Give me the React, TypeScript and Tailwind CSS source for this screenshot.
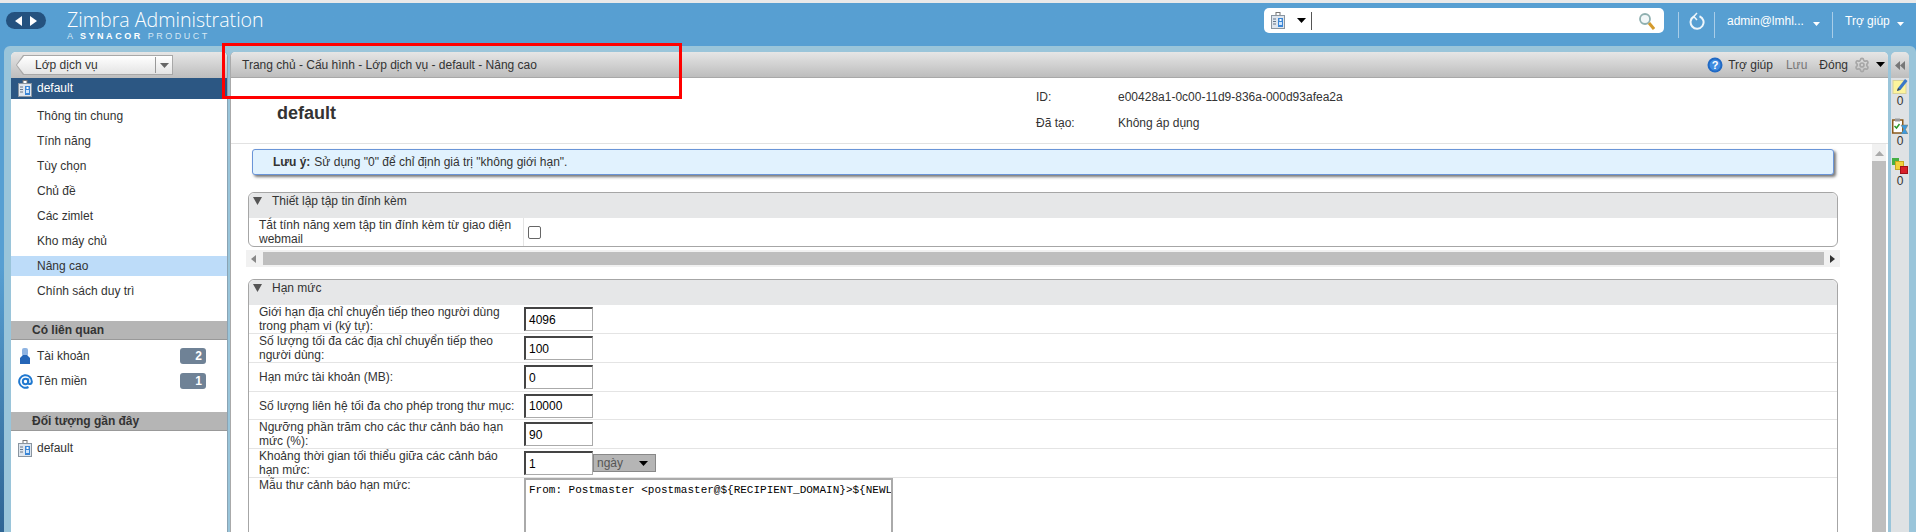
import type { ReactNode } from "react";
import { Settings } from "lucide-react";

const SANS = "font-['Liberation_Sans',Arial,sans-serif]";

const navItems = [
  "Thông tin chung",
  "Tính năng",
  "Tùy chọn",
  "Chủ đề",
  "Các zimlet",
  "Kho máy chủ",
  "Nâng cao",
  "Chính sách duy trì",
];

function Caret({ className = "" }: { className?: string }) {
  return (
    <svg width="9" height="5" viewBox="0 0 9 5" className={className}>
      <path d="M0 0h9L4.5 5z" fill="currentColor" />
    </svg>
  );
}

function CosIcon() {
  return (
    <svg width="16" height="17" viewBox="0 0 16 17" className="shrink-0">
      <rect x="6" y="0.5" width="4" height="4" fill="#fff" stroke="#777" />
      <rect x="1.5" y="3.5" width="13" height="13" fill="#dfe6ee" stroke="#8a95a0" />
      <path d="M3 7h3M3 9.5h3M3 12h3" stroke="#66778a" />
      <rect x="8" y="6" width="5" height="9" fill="#3b86d6" />
      <rect x="9.5" y="7" width="2" height="2" fill="#fff" />
      <rect x="9" y="10" width="3" height="3" fill="#cfe5fb" />
    </svg>
  );
}

function AccountIcon() {
  return (
    <svg width="10" height="16" viewBox="0 0 10 16">
      <rect x="2" y="0" width="6" height="8" rx="2" fill="#8fb4e2" />
      <path d="M3 7h4l3 3v6H0v-6z" fill="#2566b8" />
    </svg>
  );
}

function DomainIcon() {
  return (
    <svg width="15" height="15" viewBox="0 0 15 15" fill="none" stroke="#1f78d0" strokeWidth="2">
      <circle cx="7.5" cy="7.5" r="2.7" />
      <path d="M10.2 4.5v4.2c0 2 3.6 2 3.6-1.2A6.3 6.3 0 1 0 10.5 13" />
    </svg>
  );
}

function Row({
  label,
  children,
  height,
}: {
  label: string;
  children: ReactNode;
  height: string;
}) {
  return (
    <div className={`flex border-b border-[#e4e4e4] ${height}`}>
      <div className="flex w-[274px] shrink-0 items-center pl-[10px] pr-[2px] leading-[14px]">
        {label}
      </div>
      <div className="flex items-center pl-px">{children}</div>
    </div>
  );
}

function NumberBox({ value }: { value: string }) {
  return (
    <div className="flex h-[24px] w-[69px] items-center border border-t-2 border-l-2 border-t-[#444] border-r-[#aaa] border-b-[#aaa] border-l-[#444] bg-white pl-[3px] text-[12px] text-black">
      {value}
    </div>
  );
}

function Section({
  title,
  className,
  children,
}: {
  title: string;
  className: string;
  children: ReactNode;
}) {
  return (
    <section
      className={`ml-[17px] mr-[33px] rounded-[6px] border border-[#a6a6a6] ${className}`}
    >
      <div className="flex h-[25px] items-start gap-[10px] rounded-t-[6px] bg-[#e6e7e8] pl-[3px] text-[#333]">
        <svg width="9" height="9" viewBox="0 0 9 9" className="mt-[3px] ml-[1px]">
          <path d="M0 1h9L4.5 9z" fill="#555" />
        </svg>
        <span className="leading-[16px]">{title}</span>
      </div>
      {children}
    </section>
  );
}

function Sidebar() {
  return (
    <aside className="flex w-[217px] shrink-0 flex-col rounded-t-[5px] border-r border-[#8aa3b3] bg-white">
      <div className="flex h-[26px] items-center rounded-t-[5px] bg-gradient-to-b from-[#e6e6e6] to-[#bdbdbd] pl-[5px]">
        <div className="h-[20px] w-[157px] bg-[#a8a8a8] p-px [clip-path:polygon(7px_0,100%_0,100%_100%,7px_100%,0_50%)]">
          <div className="flex h-full items-center bg-gradient-to-b from-white to-[#e4e4e4] pl-[18px] text-[#333] [clip-path:polygon(7px_0,100%_0,100%_100%,7px_100%,0_50%)]">
            <span className="flex-1">Lớp dịch vụ</span>
            <span className="flex h-[16px] w-[17px] items-center justify-center border-l border-[#999]">
              <Caret className="text-[#666]" />
            </span>
          </div>
        </div>
      </div>
      <div className="flex h-[21px] items-center gap-[4px] bg-[#2c5783] pb-px pl-[6px] text-white">
        <CosIcon />
        default
      </div>
      <nav className="pt-[7px]">
        {navItems.map((item) => (
          <div
            key={item}
            className={`mb-[5px] flex h-[20px] items-center pl-[26px] text-[#333] ${
              item === "Nâng cao" ? "bg-[#bddcf9]" : ""
            }`}
          >
            {item}
          </div>
        ))}
      </nav>
      <div className="mt-[15px] flex h-[19px] items-center border-b border-[#999] bg-[#b5b5b5] pl-[21px] font-bold text-[#333]">
        Có liên quan
      </div>
      <div className="pt-[6px]">
        <div className="flex h-[20px] items-center text-[#333]">
          <span className="flex w-[26px] justify-center pl-[2px]">
            <AccountIcon />
          </span>
          <span className="flex-1">Tài khoản</span>
          <span className="mr-[21px] flex h-[16px] w-[26px] items-center justify-end rounded-[3px] bg-[#6f8296] pr-[4px] font-bold text-white">
            2
          </span>
        </div>
        <div className="mt-[5px] flex h-[20px] items-center text-[#333]">
          <span className="flex w-[26px] justify-center pl-[2px]">
            <DomainIcon />
          </span>
          <span className="flex-1">Tên miền</span>
          <span className="mr-[21px] flex h-[16px] w-[26px] items-center justify-end rounded-[3px] bg-[#6f8296] pr-[4px] font-bold text-white">
            1
          </span>
        </div>
      </div>
      <div className="mt-[21px] flex h-[19px] items-center border-b border-[#999] bg-[#b5b5b5] pl-[21px] font-bold text-[#333]">
        Đối tượng gần đây
      </div>
      <div className="flex h-[34px] items-center gap-[4px] pl-[6px] text-[#333]">
        <CosIcon />
        default
      </div>
    </aside>
  );
}

function MainPanel() {
  return (
    <main className="flex min-w-0 flex-1 flex-col rounded-t-[5px] border-l border-[#aaa] bg-white">
      <div className="flex h-[26px] shrink-0 items-center rounded-t-[5px] border-b border-[#a8a8a8] bg-gradient-to-b from-[#e6e6e6] to-[#bdbdbd] pl-[11px] pr-[3px] text-[#333]">
        <span className="flex-1">Trang chủ - Cấu hình - Lớp dịch vụ - default - Nâng cao</span>
        <svg width="16" height="16" viewBox="0 0 16 16" className="mr-[5px]">
          <circle cx="8" cy="8" r="7.5" fill="#2069c4" />
          <circle cx="8" cy="8" r="5.5" fill="#3f8ce0" />
          <text x="8" y="12" textAnchor="middle" fontSize="11" fontWeight="700" fill="#fff" fontFamily="Liberation Sans">?</text>
        </svg>
        <span>Trợ giúp</span>
        <span className="ml-[13px] text-[#777]">Lưu</span>
        <span className="ml-[12px]">Đóng</span>
        <Settings size={16} color="#a6a6a6" strokeWidth={2.5} className="ml-[6px]" />
        <Caret className="ml-[6px] text-black" />
      </div>

      <div className="flex h-[66px] shrink-0 border-b border-[#e2e2e2]">
        <h1 className="ml-[46px] mt-[25px] text-[18px] leading-[20px] font-bold text-[#333]">default</h1>
        <dl className="ml-[700px] pt-[10px] text-[#333]">
          <div className="flex h-[26px]">
            <dt className="w-[82px]">ID:</dt>
            <dd>e00428a1-0c00-11d9-836a-000d93afea2a</dd>
          </div>
          <div className="flex">
            <dt className="w-[82px]">Đã tạo:</dt>
            <dd>Không áp dụng</dd>
          </div>
        </dl>
      </div>

      <div className="flex min-h-0 flex-1">
        <div className="min-w-0 flex-1 overflow-hidden text-[#333]">
          <div className="ml-[21px] mr-[37px] mt-[5px] flex h-[26px] items-center rounded-[3px] border border-[#6a95d8] bg-[#e1f2fe] pl-[20px] shadow-[2px_2px_3px_#777]">
            <b className="mr-[4px]">Lưu ý:</b> Sử dụng "0" để chỉ định giá trị "không giới hạn".
          </div>

          <Section title="Thiết lập tập tin đính kèm" className="mt-[17px]">
            <div className="flex h-[28px]">
              <div className="flex w-[275px] shrink-0 items-center border-r border-[#e4e4e4] pl-[10px] pr-[2px] leading-[14px]">
                Tắt tính năng xem tập tin đính kèm từ giao diện webmail
              </div>
              <span className="mt-[8px] ml-[4px] h-[13px] w-[13px] rounded-[2px] border border-[#666] bg-white" />
            </div>
          </Section>

          <div className="ml-[15px] mr-[31px] mt-[3px] flex h-[17px] items-center bg-[#f1f1f1]">
            <svg width="5" height="8" viewBox="0 0 5 8" className="ml-[5px] mr-[7px]">
              <path d="M5 0v8L0 4z" fill="#888" />
            </svg>
            <div className="h-[13px] flex-1 bg-[#bebebe]" />
            <svg width="5" height="8" viewBox="0 0 5 8" className="ml-[6px] mr-[5px]">
              <path d="M0 0v8l5-4z" fill="#333" />
            </svg>
          </div>

          <Section title="Hạn mức" className="mt-[12px] h-[400px]">
            <Row label="Giới hạn địa chỉ chuyển tiếp theo người dùng trong phạm vi (ký tự):" height="h-[29px]">
              <NumberBox value="4096" />
            </Row>
            <Row label="Số lượng tối đa các địa chỉ chuyển tiếp theo người dùng:" height="h-[29px]">
              <NumberBox value="100" />
            </Row>
            <Row label="Hạn mức tài khoản (MB):" height="h-[29px]">
              <NumberBox value="0" />
            </Row>
            <Row label="Số lượng liên hệ tối đa cho phép trong thư mục:" height="h-[28px]">
              <NumberBox value="10000" />
            </Row>
            <Row label="Ngưỡng phần trăm cho các thư cảnh báo hạn mức (%):" height="h-[29px]">
              <NumberBox value="90" />
            </Row>
            <Row label="Khoảng thời gian tối thiểu giữa các cảnh báo hạn mức:" height="h-[29px]">
              <NumberBox value="1" />
              <div className="flex h-[18px] w-[63px] items-center justify-between border border-[#888] bg-[#b5b5b5] pl-[3px] pr-[7px] text-[#555]">
                ngày
                <Caret className="text-black" />
              </div>
            </Row>
            <div className="flex">
              <div className="w-[274px] shrink-0 pl-[10px] pr-[2px] leading-[14px]">Mẫu thư cảnh báo hạn mức:</div>
              <div className="ml-px h-[200px] w-[369px] overflow-hidden border-2 border-[#aaa] pl-[3px] pt-[3px] font-['Liberation_Mono',monospace] text-[11px] leading-[14px] whitespace-nowrap text-black">
                From: Postmaster &lt;postmaster@${"{RECIPIENT_DOMAIN}"}&gt;${"{NEWL"}
              </div>
            </div>
          </Section>
        </div>

        <div className="ml-px mr-[2px] flex w-[14px] shrink-0 flex-col items-center bg-[#f1f1f1]">
          <svg width="9" height="5" viewBox="0 0 9 5" className="mb-[5px] mt-[7px]">
            <path d="M4.5 0L9 5H0z" fill="#aaa" />
          </svg>
          <div className="w-full flex-1 bg-[#bebebe]" />
        </div>
      </div>
    </main>
  );
}

function ActivityRail() {
  return (
    <aside className="ml-px flex w-[18px] shrink-0 flex-col items-center rounded-t-[5px] bg-[#dfe2e4] text-[#333]">
      <div className="flex h-[26px] w-full shrink-0 items-center justify-center rounded-t-[5px] bg-gradient-to-b from-[#e6e6e6] to-[#bdbdbd]">
        <svg width="10" height="9" viewBox="0 0 10 9">
          <path d="M5 0v9L0 4.5zM10 0v9L5 4.5z" fill="#777" />
        </svg>
      </div>
      <svg width="16" height="16" viewBox="0 0 16 16" className="shrink-0">
        <rect x="1" y="2.5" width="13" height="13" fill="#fdf49c" stroke="#d8d29a" />
        <path d="M5 13l1-3 7-9 2.5 2-7 9z" fill="#3a78c8" />
        <path d="M5 13l1-3 2 1.5z" fill="#444" />
      </svg>
      <span className="leading-[14px]">0</span>
      <svg width="16" height="16" viewBox="0 0 16 16" className="mt-[10px] shrink-0">
        <rect x="0.75" y="2" width="10" height="13" fill="#fff" stroke="#8a5a1c" strokeWidth="1.5" />
        <rect x="3" y="0.5" width="5" height="3" fill="#9a9a9a" />
        <path d="M2.5 8l2 2 3-4" stroke="#2a9a2a" strokeWidth="1.5" fill="none" />
        <path d="M9 7h7l-2.5 4.5L16 16H9l2.5-4.5z" fill="#3e9be0" stroke="#8a7a50" strokeWidth="0.5" />
      </svg>
      <span className="leading-[14px]">0</span>
      <svg width="16" height="16" viewBox="0 0 16 16" className="mt-[10px] shrink-0">
        <rect x="0" y="0" width="7" height="7" fill="#45b045" />
        <rect x="3.5" y="3.5" width="8" height="8" fill="#f3d23c" stroke="#c8a820" />
        <rect x="8.5" y="8.5" width="7" height="7" fill="#d9202a" stroke="#a01018" />
      </svg>
      <span className="leading-[14px]">0</span>
    </aside>
  );
}

export default function App() {
  return (
    <div className={`relative h-[532px] w-full overflow-hidden bg-[#e9e9e9] text-[12px] ${SANS}`}>
      <div className="mt-[3px] flex h-[529px] flex-col bg-gradient-to-b from-[#579fd2] via-[#579fd2] to-[#2f6594]">
        <header className="flex h-[43px] shrink-0 items-start text-white">
          <div className="ml-[6px] mt-[9px] flex h-[17px] w-[40px] items-center justify-around rounded-full bg-[#24527f] px-[5px]">
            <svg width="7" height="10" viewBox="0 0 7 10"><path d="M7 0v10L0 5z" fill="#fff" /></svg>
            <svg width="7" height="10" viewBox="0 0 7 10"><path d="M0 0v10l7-5z" fill="#fff" /></svg>
          </div>
          <div className="ml-[21px] mt-[6px]">
            <div className="font-['Open_Sans',sans-serif] text-[19.6px] font-light leading-[22px]">Zimbra Administration</div>
            <div className="text-[9px] leading-[10px] tracking-[0.28em] text-[#d5e7f4]">
              A <b className="text-white">SYNACOR</b> PRODUCT
            </div>
          </div>
          <div className="ml-auto mt-[5px] flex h-[25px] w-[400px] items-center rounded-[5px] bg-white pl-[6px] pr-[9px]">
            <CosIcon />
            <Caret className="ml-[11px] text-black" />
            <span className="ml-[5px] h-[18px] w-px bg-[#555]" />
            <svg width="16" height="18" viewBox="0 0 16 18" className="ml-auto">
              <circle cx="6" cy="7" r="5" fill="#f2f7f8" stroke="#8fb0b0" strokeWidth="1.8" />
              <path d="M10 11l5 6" stroke="#d49a2c" strokeWidth="3" />
            </svg>
          </div>
          <div className="ml-[14px] mr-[12px] mt-[9px] flex h-[26px] items-start">
            <div className="flex h-[26px] w-[37px] items-center justify-center border-x border-[#a8cde8] pb-[9px]">
              <svg width="16" height="18" viewBox="0 0 16 18" fill="none" stroke="#eef6fb" strokeWidth="2">
                <path d="M5 4.5A6.5 6.5 0 1 0 10.5 4.2" />
                <path d="M8 1L4.8 4.5 8 8" strokeWidth="1.5" />
              </svg>
            </div>
            <div className="flex h-[26px] w-[118px] items-start border-r border-[#a8cde8] pl-[12px]">
              <span className="w-[86px]">admin@lmhl...</span>
              <Caret className="mt-[10px] h-[4px] w-[7px] text-white" />
            </div>
            <div className="flex h-[26px] items-start pl-[12px]">
              <span className="w-[52px]">Trợ giúp</span>
              <Caret className="mt-[10px] h-[4px] w-[7px] text-white" />
            </div>
          </div>
        </header>

        <div className="ml-[4px] flex min-h-0 flex-1 gap-[2px] rounded-t-[6px] bg-[#9ac5da] px-[7px] pt-[6px]">
          <Sidebar />
          <MainPanel />
          <ActivityRail />
        </div>
      </div>

      {/* red annotation drawn over the screenshot */}
      <div className="absolute left-[222px] top-[43px] h-[56px] w-[460px] border-[3px] border-[#f00]" />
    </div>
  );
}
